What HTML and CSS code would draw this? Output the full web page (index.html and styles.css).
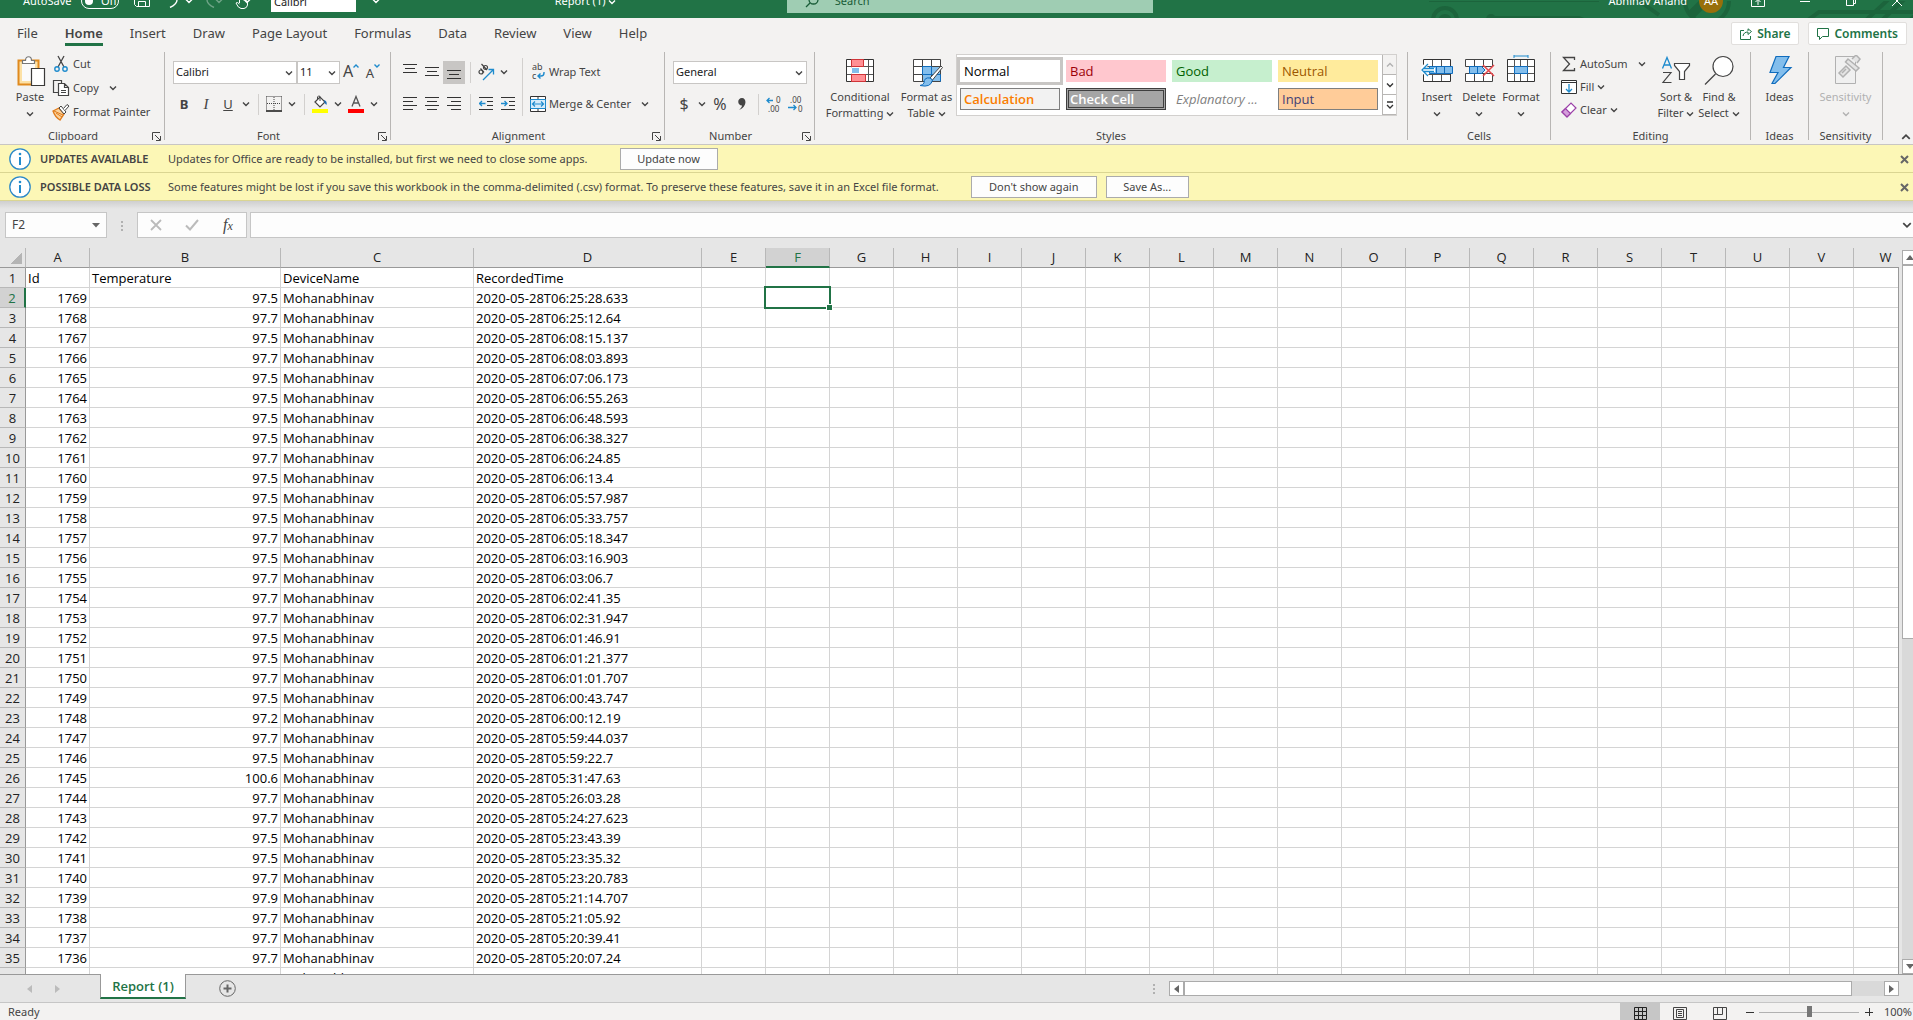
FILE: index.html
```
<!DOCTYPE html>
<html lang="en">
<head>
    <meta charset="UTF-8">
    <meta name="viewport" content="width=device-width, initial-scale=1.0">
    <title>Report (1) - Excel</title>
    <link rel="stylesheet" href="styles.css">
</head>
<body>
    <!-- Shared symbols -->
    <svg class="symbols" aria-hidden="true">
        <symbol id="chevron" viewBox="0 0 8 6"><path d="M1 1.5 L4 4.5 L7 1.5" fill="none" stroke="currentColor" stroke-width="1.4"/></symbol>
        <symbol id="launcher" viewBox="0 0 9 9"><path d="M.5 8 V.5 H8 M3 3 L8 8 M8.5 4 V8.5 H4" fill="none" stroke="currentColor"/></symbol>
        <symbol id="cross" viewBox="0 0 9 9"><path d="M1 1 L8 8 M8 1 L1 8" fill="none" stroke="currentColor" stroke-width="2"/></symbol>
        <symbol id="info" viewBox="0 0 22 22"><circle cx="11" cy="11" r="10.2" fill="#fff" stroke="#2b88c8" stroke-width="1.3"/><path d="M11 9 V17" stroke="#1e8bcd" stroke-width="2"/><circle cx="11" cy="6" r="1.3" fill="#1e8bcd"/></symbol>
    </svg>

    <!-- Title bar -->
    <header class="titlebar">
        <div class="titlebar-inner">
            <div class="quick">
                <label class="autosave" for="autosave">AutoSave</label>
                <button class="toggle" id="autosave"><i></i>Off</button>
                <button aria-label="Save"><svg width="18" height="18" viewBox="0 0 18 18" fill="none" stroke="#fff"><path d="M1.500 1.500 H16.500 V16.500 H3.500 L1.500 14.500 Z M5.500 16 V11.500 H12.500 V16 M4.500 2 V7.500 H13.500 V2"/></svg></button>
                <button aria-label="Undo"><svg width="16" height="18" viewBox="0 0 16 18" fill="none" stroke="#fff" stroke-width="1.400"><path d="M1 2 V9 H7 M1.500 8.500 C5 3 14 4 14 10 C14 14 10 16 7 17.500"/></svg></button>
                <svg class="caret" width="8" height="6"><use href="#chevron"/></svg>
                <button class="faded" aria-label="Redo"><svg width="16" height="18" viewBox="0 0 16 18" fill="none" stroke="#fff" stroke-width="1.400"><path d="M15 2 V9 H9 M14.500 8.500 C11 3 2 4 2 10 C2 14 6 16 9 17.500"/></svg></button>
                <svg class="caret faded" width="8" height="6"><use href="#chevron"/></svg>
                <button aria-label="Touch mode"><svg width="14" height="20" viewBox="0 0 14 20" fill="none" stroke="#fff"><path d="M4.500 14 V4 Q5.500 2.500 6.500 4 V11 V9 Q8 8 8.500 9.500 V11 Q10 9 10.500 11 V12 Q12.500 11 12.500 13 V16 Q12 19 9 19.500 H6 Q3 19 1 14 Q2 12.500 4.500 15"/></svg></button>
                <svg class="caret" width="8" height="6"><use href="#chevron"/></svg>
                <input class="quick-font" value="Calibri" aria-label="Font">
                <svg class="caret" width="8" height="6"><use href="#chevron"/></svg>
            </div>
            <div class="doc-name">Report (1) <svg width="8" height="6"><use href="#chevron"/></svg></div>
            <label class="search">
                <svg width="14" height="14" viewBox="0 0 14 14" fill="none" stroke="#185c37" stroke-width="1.300"><circle cx="8.500" cy="5.500" r="4.500"/><path d="M5 9 L1 13"/></svg>
                <input placeholder="Search" aria-label="Search">
            </label>
            <div class="account">
                <svg class="circuit" width="500" height="18" viewBox="0 0 500 18" fill="none" stroke="#1c643c" stroke-width="4"><circle cx="16" cy="19" r="12"/><circle cx="16" cy="20" r="5" fill="#1c643c"/><circle cx="62" cy="18" r="3"/><path d="M66 17 H150 L162 22 M0 -1 H170 M205 -4 L230 14 M375 22 L390 11 H500 M436 20 L462 -4 M452 20 L478 -4 M480 20 L500 2"/><circle cx="278" cy="0" r="22"/><path d="M262 14 L278 -2" stroke-width="9"/></svg>
                <span>Abhinav Anand</span>
                <span class="avatar">AA</span>
                <button aria-label="Ribbon options"><svg width="14" height="12" viewBox="0 0 14 12" fill="none" stroke="#fff"><path d="M.5 .5 H13.500 V11.500 H.5 Z M7 10 V5 M4.500 7 L7 4.500 L9.500 7"/></svg></button>
                <button aria-label="Minimize"><svg width="12" height="12" viewBox="0 0 12 12" stroke="#fff"><path d="M1 6.500 H11"/></svg></button>
                <button aria-label="Restore"><svg width="12" height="12" viewBox="0 0 12 12" fill="none" stroke="#fff"><path d="M1.500 3.500 H8.500 V10.500 H1.500 Z M3.500 3 V1.500 H10.500 V8.500 H9"/></svg></button>
                <button aria-label="Close"><svg width="12" height="12" viewBox="0 0 12 12" stroke="#fff"><path d="M1 1 L11 11 M11 1 L1 11"/></svg></button>
            </div>
        </div>
    </header>

    <!-- Ribbon tabs -->
    <nav class="tabs">
        <a href="#">File</a>
        <a href="#" class="active">Home</a>
        <a href="#">Insert</a>
        <a href="#">Draw</a>
        <a href="#">Page Layout</a>
        <a href="#">Formulas</a>
        <a href="#">Data</a>
        <a href="#">Review</a>
        <a href="#">View</a>
        <a href="#">Help</a>
        <span class="spacer"></span>
        <button class="pill"><svg width="12" height="12" viewBox="0 0 12 12" fill="none" stroke="#217346"><path d="M4 2.500 H.5 V11.500 H10.500 V8 M3 8 C3.500 5 5.500 4 8 4 V6.500 L11.500 3.500 L8 .8 V3"/></svg>Share</button>
        <button class="pill"><svg width="12" height="12" viewBox="0 0 12 12" fill="none" stroke="#217346"><path d="M.5 .5 H11.500 V8.500 H5.500 L2.500 11.500 V8.500 H.5 Z"/></svg>Comments</button>
    </nav>

    <!-- Ribbon -->
    <section class="ribbon">
        <div class="group clipboard">
            <div class="group-body">
                <button class="big">
                    <svg width="32" height="32" viewBox="0 0 32 32" fill="none"><path d="M4.500 5.500 H24.500 V29.500 H4.500 Z" fill="#fce1a6" stroke="#e08a1e" stroke-width="2"/><path d="M8 9 H21 V26 H8 Z" fill="#fafafa"/><path d="M8.500 8.500 V5.500 H11.500 C11.500 .5 17.500 .5 17.500 5.500 H20.500 V8.500 Z" fill="#fff" stroke="#777" stroke-width="1.200"/><path d="M17.500 13.500 H30.500 V30.500 H17.500 Z" fill="#fff" stroke="#3b3a39" stroke-width="1.200"/></svg>
                    <span>Paste</span><span><svg width="8" height="6"><use href="#chevron"/></svg></span>
                </button>
                <div class="stack">
                    <button class="small"><svg width="18" height="18" viewBox="0 0 18 18" fill="none"><path d="M6 1 L12 12 M12 1 L6 12" stroke="#444" stroke-width="1.300"/><circle cx="5" cy="14" r="2.200" stroke="#1e8bcd" stroke-width="1.400"/><circle cx="13" cy="14" r="2.200" stroke="#1e8bcd" stroke-width="1.400"/></svg>Cut</button>
                    <button class="small"><svg width="18" height="18" viewBox="0 0 18 18" fill="none" stroke="#444" stroke-width="1.200"><path d="M6 13.500 H1.500 V1.500 H9.500 V4"/><path d="M6.500 4.500 H12.500 L16.500 8.500 V16.500 H6.500 Z M12.500 4.500 V8.500 H16 M9 11.500 H14 M9 13.500 H14" fill="#fff"/></svg>Copy<svg class="chev" width="8" height="6"><use href="#chevron"/></svg></button>
                    <button class="small"><svg width="18" height="18" viewBox="0 0 18 18" fill="none"><path d="M1 8 L7 5 L12 11 L8 17 Q3 14 1 8 Z" fill="#fbd29c" stroke="#e07b1a" stroke-width="1.300"/><path d="M4 10 L10 14 M2 8 L11 12" stroke="#e07b1a"/><path d="M7 5 L9 3 L14 9 L12 11 Z" fill="#fff" stroke="#444"/><path d="M11.500 5.500 L15 1.500 L17 3 L13 7.500" fill="#fff" stroke="#444"/></svg>Format Painter</button>
                </div>
            </div>
            <div class="group-label">Clipboard<svg width="9" height="9"><use href="#launcher"/></svg></div>
        </div>

        <div class="group font">
            <div class="group-body rows">
                <div class="row">
                    <label class="combo combo-font"><select aria-label="Font name"><option>Calibri</option></select><svg width="8" height="6"><use href="#chevron"/></svg></label>
                    <label class="combo combo-size"><select aria-label="Font size"><option>11</option></select><svg width="8" height="6"><use href="#chevron"/></svg></label>
                    <button class="tool grow">A<svg width="6" height="4" viewBox="0 0 6 4"><path d="M.5 3.500 L3 1 L5.500 3.500" fill="none" stroke="#1e8bcd" stroke-width="1.400"/></svg></button>
                    <button class="tool shrink">A<svg width="6" height="4" viewBox="0 0 6 4"><path d="M.5 .5 L3 3 L5.500 .5" fill="none" stroke="#1e8bcd" stroke-width="1.400"/></svg></button>
                </div>
                <div class="row">
                    <button class="tool bold">B</button>
                    <button class="tool italic">I</button>
                    <button class="tool underline">U</button>
                    <button class="drop" aria-label="Underline options"><svg width="8" height="6"><use href="#chevron"/></svg></button>
                    <span class="sep"></span>
                    <button class="tool" aria-label="Borders"><svg width="16" height="16" viewBox="0 0 16 16" fill="none" stroke="#444"><path d="M.5 .5 H15.500 M.5 .5 V14 M15.500 .5 V14 M8 1 V14 M1 7.500 H15" stroke-dasharray="1 1"/><path d="M0 15 H16" stroke="#222" stroke-width="1.600"/></svg></button>
                    <button class="drop" aria-label="Border options"><svg width="8" height="6"><use href="#chevron"/></svg></button>
                    <span class="sep"></span>
                    <button class="tool" aria-label="Fill color"><svg width="16" height="18" viewBox="0 0 16 18" fill="none"><path d="M3 7 L8 2 L13 7 L8 12 Z" fill="#fff" stroke="#444" stroke-width="1.200"/><path d="M8 6 V1.500 Q6.500 0 5.500 2 V4" stroke="#444"/><path d="M12 5 Q15.500 6 14.500 10 L12.500 8 Z" fill="#1e6fb5"/><path d="M0 14 H16 V18 H0 Z" fill="#ff0"/></svg></button>
                    <button class="drop" aria-label="Fill options"><svg width="8" height="6"><use href="#chevron"/></svg></button>
                    <button class="tool" aria-label="Font color"><svg width="16" height="18" viewBox="0 0 16 18" fill="none"><path d="M4 11.500 L8 1.500 L12 11.500 M5.300 8 H10.700" stroke="#555" stroke-width="1.300"/><path d="M0 14 H16 V18 H0 Z" fill="#f00"/></svg></button>
                    <button class="drop" aria-label="Font color options"><svg width="8" height="6"><use href="#chevron"/></svg></button>
                </div>
            </div>
            <div class="group-label">Font<svg width="9" height="9"><use href="#launcher"/></svg></div>
        </div>

        <div class="group alignment">
            <div class="group-body">
                <div class="rows align-rows">
                    <div class="row">
                        <button class="tool" aria-label="Top align"><svg width="14" height="18" viewBox="0 0 14 18" stroke="#333"><path d="M0 1.500 H14 M2 5.500 H12 M0 9.500 H14"/></svg></button>
                        <button class="tool" aria-label="Middle align"><svg width="14" height="18" viewBox="0 0 14 18" stroke="#333"><path d="M0 4.500 H14 M2 8.500 H12 M0 12.500 H14"/></svg></button>
                        <button class="tool pressed" aria-label="Bottom align"><svg width="14" height="18" viewBox="0 0 14 18" stroke="#333"><path d="M0 7.500 H14 M2 11.500 H12 M0 15.500 H14"/></svg></button>
                        <span class="sep"></span>
                        <button class="tool" aria-label="Orientation"><svg width="18" height="18" viewBox="0 0 18 18" fill="none"><g stroke="#444" stroke-width="1.200"><circle cx="4" cy="9" r="2"/><path d="M3.500 5.500 L7 9.500 M4.500 1 L10 7"/><circle cx="8.500" cy="4.500" r="2"/></g><path d="M6 17 L16 7 M11.500 6.500 H16.500 V11.500" stroke="#1e8bcd" stroke-width="1.300"/></svg></button>
                        <button class="drop" aria-label="Orientation options"><svg width="8" height="6"><use href="#chevron"/></svg></button>
                    </div>
                    <div class="row">
                        <button class="tool" aria-label="Align left"><svg width="14" height="14" viewBox="0 0 14 14" stroke="#333"><path d="M0 .5 H14 M0 4.500 H10 M0 8.500 H14 M0 12.500 H10"/></svg></button>
                        <button class="tool" aria-label="Center"><svg width="14" height="14" viewBox="0 0 14 14" stroke="#333"><path d="M0 .5 H14 M2 4.500 H12 M0 8.500 H14 M2 12.500 H12"/></svg></button>
                        <button class="tool" aria-label="Align right"><svg width="14" height="14" viewBox="0 0 14 14" stroke="#333"><path d="M0 .5 H14 M4 4.500 H14 M0 8.500 H14 M4 12.500 H14"/></svg></button>
                        <span class="sep"></span>
                        <button class="tool" aria-label="Decrease indent"><svg width="14" height="14" viewBox="0 0 14 14" fill="none" stroke="#333"><path d="M0 .5 H14 M8 4.500 H14 M8 8.500 H14 M0 12.500 H14"/><path d="M6.500 6.500 H.5 M3 4 L.5 6.500 L3 9" stroke="#1e8bcd" stroke-width="1.300"/></svg></button>
                        <button class="tool" aria-label="Increase indent"><svg width="14" height="14" viewBox="0 0 14 14" fill="none" stroke="#333"><path d="M0 .5 H14 M8 4.500 H14 M8 8.500 H14 M0 12.500 H14"/><path d="M0 6.500 H6 M3.500 4 L6 6.500 L3.500 9" stroke="#1e8bcd" stroke-width="1.300"/></svg></button>
                    </div>
                </div>
                <span class="sep tall"></span>
                <div class="rows wrap-rows">
                    <button class="small"><svg width="16" height="18" viewBox="0 0 16 18"><text x="2" y="7" class="glyph">ab</text><text x="2" y="16" class="glyph">c</text><path d="M14 9 V10 Q14 13 11 13 H8 M10.500 10.500 L8 13 L10.500 15.500" fill="none" stroke="#1e8bcd" stroke-width="1.400"/></svg>Wrap Text</button>
                    <button class="small"><svg width="16" height="16" viewBox="0 0 16 16" fill="none"><path d="M.5 .5 H15.500 V15.500 H.5 Z M8 0 V4 M8 12 V16" fill="#fff" stroke="#333"/><path d="M.5 3.500 H15.500 V12.500 H.5 Z" fill="#d6ecfa" stroke="#1e8bcd"/><path d="M3 8 H13 M5 5.500 L2.500 8 L5 10.500 M11 5.500 L13.500 8 L11 10.500" stroke="#1e8bcd" stroke-width="1.200"/></svg>Merge &amp; Center<svg class="chev" width="8" height="6"><use href="#chevron"/></svg></button>
                </div>
            </div>
            <div class="group-label">Alignment<svg width="9" height="9"><use href="#launcher"/></svg></div>
        </div>

        <div class="group number">
            <div class="group-body rows">
                <div class="row">
                    <label class="combo combo-number"><select aria-label="Number format"><option>General</option></select><svg width="8" height="6"><use href="#chevron"/></svg></label>
                </div>
                <div class="row">
                    <button class="tool sign">$</button>
                    <button class="drop" aria-label="Currency options"><svg width="8" height="6"><use href="#chevron"/></svg></button>
                    <button class="tool sign">%</button>
                    <button class="tool" aria-label="Comma style"><svg width="8" height="12" viewBox="0 0 8 12"><path d="M4 0 C9 0 9 9 1 12 C3 10 4 9 4 7.500 C-1 7.500 -1 0 4 0 Z" fill="#444"/></svg></button>
                    <span class="sep"></span>
                    <button class="tool" aria-label="Increase decimal"><svg width="16" height="16" viewBox="0 0 16 16"><text x="10" y="7" class="digits">0</text><text x="2" y="16" class="digits">.00</text><path d="M7 4.500 H1 M3.500 2 L1 4.500 L3.500 7" fill="none" stroke="#1e8bcd" stroke-width="1.300"/></svg></button>
                    <button class="tool" aria-label="Decrease decimal"><svg width="16" height="16" viewBox="0 0 16 16"><text x="2" y="7" class="digits">.00</text><text x="10" y="16" class="digits">0</text><path d="M0 11.500 H8 M5.500 9 L8 11.500 L5.500 14" fill="none" stroke="#1e8bcd" stroke-width="1.300"/></svg></button>
                </div>
            </div>
            <div class="group-label">Number<svg width="9" height="9"><use href="#launcher"/></svg></div>
        </div>

        <div class="group styles">
            <div class="group-body">
                <button class="big wide">
                    <svg width="32" height="32" viewBox="0 0 32 32" fill="none"><path d="M2.500 4.500 H29.500 V26.500 H2.500 Z" fill="#fff" stroke="#333"/><path d="M3 11.500 H29 M3 19.500 H29 M7.500 5 V26 M24.500 5 V26" stroke="#555"/><path d="M7.500 4.500 H19.500 V11.500 H7.500 Z M7.500 19.500 H21.500 V26.500 H7.500 Z" fill="#ff9095" stroke="#d13438"/><path d="M7.500 12.500 H15.500 V18.500 H7.500 Z" fill="#83beec" stroke="#fff"/></svg>
                    <span>Conditional</span><span>Formatting <svg width="8" height="6"><use href="#chevron"/></svg></span>
                </button>
                <button class="big mid">
                    <svg width="32" height="32" viewBox="0 0 32 32" fill="none"><path d="M2.500 4.500 H29.500 V26.500 H2.500 Z" fill="#fff"/><path d="M11.500 11.500 H29.500 V26.500 H11.500 Z" fill="#83beec"/><path d="M2.500 4.500 H29.500 V26.500 H2.500 Z M3 11.500 H29 M3 19.500 H29 M11.500 5 V26 M20.500 5 V26" stroke="#444"/><path d="M11.500 19.500 H29.500 V26.500 M11.500 19.500 H20.500 V11.500 H11.500 Z" stroke="#0f6cbd"/><path d="M30 11 L19 23 L21.500 25 L31.500 12.500 Z" fill="#fff" stroke="#444"/><path d="M19 23 Q13 22 13 28 Q12 30 9 30.500 Q20 33 21.500 25 Z" fill="#83beec" stroke="#0f6cbd"/></svg>
                    <span>Format as</span><span>Table <svg width="8" height="6"><use href="#chevron"/></svg></span>
                </button>
                <div class="gallery">
                    <div class="swatches">
                        <button class="swatch normal">Normal</button>
                        <button class="swatch bad">Bad</button>
                        <button class="swatch good">Good</button>
                        <button class="swatch neutral">Neutral</button>
                        <button class="swatch calculation">Calculation</button>
                        <button class="swatch check">Check Cell</button>
                        <button class="swatch explanatory">Explanatory ...</button>
                        <button class="swatch input">Input</button>
                    </div>
                    <div class="gallery-scroll">
                        <button class="off" aria-label="Previous styles"><svg class="flip" width="8" height="6"><use href="#chevron"/></svg></button>
                        <button aria-label="Next styles"><svg width="8" height="6"><use href="#chevron"/></svg></button>
                        <button aria-label="More styles"><svg width="8" height="8" viewBox="0 0 8 8" fill="none" stroke="#333" stroke-width="1.300"><path d="M1 1 H7 M1 4 L4 7 L7 4"/></svg></button>
                    </div>
                </div>
            </div>
            <div class="group-label plain">Styles</div>
        </div>

        <div class="group cells">
            <div class="group-body">
                <button class="big slim">
                    <svg width="32" height="32" viewBox="0 0 32 32" fill="none"><path d="M2.500 4.500 H29.500 V26.500 H2.500 Z" fill="#fff" stroke="#333"/><path d="M3 11.500 H29 M3 19.500 H29 M11.500 5 V26 M20.500 5 V26" stroke="#555"/><path d="M8.500 11.500 H31.500 V18.500 H8.500 Z M15.500 12 V18 M23.500 12 V18" fill="#83beec" stroke="#0f6cbd"/><path d="M6.500 8.500 L.5 14.500 L6.500 20.500 M1 15 H14" stroke="#fff" stroke-width="4"/><path d="M7 9 L1 15 L7 21 M3 13.500 H13 M3 16.500 H13" stroke="#1e8bcd" stroke-width="1.300"/></svg>
                    <span>Insert</span><span><svg width="8" height="6"><use href="#chevron"/></svg></span>
                </button>
                <button class="big slim">
                    <svg width="32" height="32" viewBox="0 0 32 32" fill="none"><path d="M2.500 4.500 H29.500 V11.500 H2.500 Z M2.500 18.500 H29.500 V26.500 H2.500 Z M11.500 5 V11 M20.500 5 V11 M11.500 19 V26 M20.500 19 V26" fill="#fff" stroke="#444"/><path d="M6.500 11.500 H18.500 L22 15 L18.500 18.500 H6.500 Z M14.500 12 V18" fill="#83beec" stroke="#0f6cbd"/><path d="M20 10 L31 21 M31 10 L20 21" stroke="#e8474c" stroke-width="1.500"/></svg>
                    <span>Delete</span><span><svg width="8" height="6"><use href="#chevron"/></svg></span>
                </button>
                <button class="big slim">
                    <svg width="32" height="32" viewBox="0 0 32 32" fill="none"><path d="M2.500 4.500 H29.500 V26.500 H2.500 Z" fill="#fff" stroke="#333"/><path d="M3 11.500 H29 M3 18.500 H29 M9.500 5 V26 M15.500 5 V11 M22.500 5 V26 M15.500 19 V26" stroke="#555"/><path d="M9.500 11.500 H22.500 V18.500 H9.500 Z" fill="#83beec" stroke="#0f6cbd"/><path d="M9 1 H23 M9 -1 V3 M23 -1 V3" stroke="#1e8bcd"/></svg>
                    <span>Format</span><span><svg width="8" height="6"><use href="#chevron"/></svg></span>
                </button>
            </div>
            <div class="group-label plain">Cells</div>
        </div>

        <div class="group editing">
            <div class="group-body">
                <div class="stack">
                    <button class="small"><svg width="16" height="16" viewBox="0 0 16 16" fill="none" stroke="#444" stroke-width="1.300"><path d="M13.500 4 V1.500 H2.500 L8.500 8 L2.500 14.500 H13.500 V12"/></svg>AutoSum<svg class="chev" width="8" height="6"><use href="#chevron"/></svg></button>
                    <button class="small"><svg width="16" height="16" viewBox="0 0 16 16" fill="none"><path d="M.5 1.500 H15.500 V14.500 H.5 Z M.5 3.500 H15.500" fill="#fff" stroke="#333"/><path d="M8 5 V13 M5 10 L8 13 L11 10" stroke="#1e8bcd" stroke-width="1.300"/></svg>Fill<svg width="8" height="6"><use href="#chevron"/></svg></button>
                    <button class="small"><svg width="16" height="16" viewBox="0 0 16 16" fill="none"><path d="M1 10 L10 1 L15 6 L6 15 Z" fill="#fff" stroke="#9b3fa8" stroke-width="1.200"/><path d="M1 10 L4.500 6.500 L9.500 11.500 L6 15 Z" fill="#d59edb" stroke="#9b3fa8" stroke-width="1.200"/></svg>Clear<svg width="8" height="6"><use href="#chevron"/></svg></button>
                </div>
                <button class="big slim">
                    <svg width="32" height="32" viewBox="0 0 32 32" fill="none"><path d="M2.500 13.500 L7 2.500 L11.500 13.500 M4 10 H10" stroke="#1e8bcd" stroke-width="1.300"/><path d="M3 17.500 H11 L3 27.500 H11.500" stroke="#444" stroke-width="1.200"/><path d="M14.500 8.500 H29.500 V10.500 L24.500 16.500 V24.500 H19.500 V16.500 L14.500 10.500 Z" fill="#fff" stroke="#444" stroke-width="1.200"/></svg>
                    <span>Sort &amp;</span><span>Filter <svg width="8" height="6"><use href="#chevron"/></svg></span>
                </button>
                <button class="big find">
                    <svg width="32" height="32" viewBox="0 0 32 32" fill="none" stroke="#444" stroke-width="1.200"><circle cx="20" cy="11.500" r="10" fill="#fff"/><path d="M12.500 19 L2 29.500"/></svg>
                    <span>Find &amp;</span><span>Select <svg width="8" height="6"><use href="#chevron"/></svg></span>
                </button>
            </div>
            <div class="group-label plain">Editing</div>
        </div>

        <div class="group ideas">
            <div class="group-body">
                <button class="big">
                    <svg width="32" height="32" viewBox="0 0 32 32"><path d="M12 1.500 H25 L19.500 12.500 H27 L11 28.500 H8 L14 17.500 H6 Z" fill="#83beec" stroke="#0f6cbd" stroke-width="1.200"/></svg>
                    <span>Ideas</span>
                </button>
            </div>
            <div class="group-label plain">Ideas</div>
        </div>

        <div class="group sensitivity">
            <div class="group-body">
                <button class="big" disabled>
                    <svg width="32" height="32" viewBox="0 0 32 32" fill="none"><path d="M5.500 1.500 H25.500 V28.500 H5.500 Z" fill="#f0f0f0" stroke="#b1b1b1"/><path d="M9 18 L16 11 L20 15 L13 22 Z M12 18 L16 14" fill="#e4e4e4" stroke="#b1b1b1" stroke-width="1.500"/><path d="M18 4 L29 13 L26 16 L15.500 7 Z M22 4 L26 0 L30 4 L27 8" fill="#e4e4e4" stroke="#b1b1b1" stroke-width="1.500"/></svg>
                    <span>Sensitivity</span><span><svg width="8" height="6"><use href="#chevron"/></svg></span>
                </button>
            </div>
            <div class="group-label plain">Sensitivity</div>
        </div>

        <button class="collapse" aria-label="Collapse the ribbon"><svg class="flip" width="10" height="8"><use href="#chevron"/></svg></button>
    </section>

    <!-- Message bars -->
    <div class="notice">
        <svg width="22" height="22"><use href="#info"/></svg>
        <strong>UPDATES AVAILABLE</strong>
        <span class="message">Updates for Office are ready to be installed, but first we need to close some apps.</span>
        <button class="notice-button update">Update now</button>
        <button class="dismiss" aria-label="Close"><svg width="9" height="9"><use href="#cross"/></svg></button>
    </div>
    <div class="notice">
        <svg width="22" height="22"><use href="#info"/></svg>
        <strong>POSSIBLE DATA LOSS</strong>
        <span class="message">Some features might be lost if you save this workbook in the comma-delimited (.csv) format. To preserve these features, save it in an Excel file format.</span>
        <button class="notice-button dont-show">Don't show again</button>
        <button class="notice-button save-as">Save As...</button>
        <button class="dismiss" aria-label="Close"><svg width="9" height="9"><use href="#cross"/></svg></button>
    </div>

    <!-- Formula bar -->
    <div class="formula-bar">
        <label class="name-box"><input value="F2" aria-label="Name box"><svg width="8" height="5" viewBox="0 0 8 5"><path d="M0 0 H8 L4 4.500 Z" fill="#666"/></svg></label>
        <span class="grip"><i></i><i></i><i></i></span>
        <div class="formula-tools">
            <button aria-label="Cancel"><svg width="12" height="12" viewBox="0 0 12 12"><path d="M1 1 L11 11 M11 1 L1 11" stroke="#bbb" stroke-width="1.800"/></svg></button>
            <button aria-label="Enter"><svg width="14" height="12" viewBox="0 0 14 12"><path d="M1 6.500 L5 10.500 L13 1" fill="none" stroke="#bbb" stroke-width="2"/></svg></button>
            <button class="fx"><i>f</i><sub>x</sub></button>
        </div>
        <label class="formula"><input aria-label="Formula"><svg width="10" height="8"><use href="#chevron"/></svg></label>
    </div>

    <!-- Worksheet -->
    <main class="sheet">
        <div class="sheet-view">
            <table class="grid">
                <colgroup id="cols"></colgroup>
                <thead><tr id="letters"></tr></thead>
                <tbody id="rows"></tbody>
            </table>
        </div>
        <div class="vscroll">
            <button aria-label="Scroll up"><svg width="8" height="5" viewBox="0 0 8 5"><path d="M4 0 L8 5 H0 Z" fill="#666"/></svg></button>
            <span class="vthumb"></span>
            <span class="vtrack"></span>
            <button aria-label="Scroll down"><svg width="8" height="5" viewBox="0 0 8 5"><path d="M0 0 H8 L4 5 Z" fill="#666"/></svg></button>
        </div>
    </main>

    <!-- Sheet tabs and horizontal scroll -->
    <div class="sheet-bar">
        <div class="sheet-nav">
            <button aria-label="Previous sheet"><svg width="5" height="8" viewBox="0 0 5 8"><path d="M5 0 V8 L0 4 Z" fill="#bbb"/></svg></button>
            <button aria-label="Next sheet"><svg width="5" height="8" viewBox="0 0 5 8"><path d="M0 0 V8 L5 4 Z" fill="#bbb"/></svg></button>
        </div>
        <button class="sheet-tab">Report (1)</button>
        <button class="add-sheet" aria-label="New sheet"><svg width="17" height="17" viewBox="0 0 17 17" fill="none" stroke="#666"><circle cx="8.500" cy="8.500" r="7.800"/><path d="M8.500 4.500 V12.500 M4.500 8.500 H12.500" stroke-width="2"/></svg></button>
        <span class="grip"><i></i><i></i><i></i></span>
        <div class="hscroll">
            <button aria-label="Scroll left"><svg width="5" height="8" viewBox="0 0 5 8"><path d="M5 0 V8 L0 4 Z" fill="#666"/></svg></button>
            <span class="hthumb"></span>
            <span class="htrack"></span>
            <button aria-label="Scroll right"><svg width="5" height="8" viewBox="0 0 5 8"><path d="M0 0 V8 L5 4 Z" fill="#666"/></svg></button>
        </div>
    </div>

    <!-- Status bar -->
    <footer class="status">
        <span>Ready</span>
        <span class="spacer"></span>
        <button class="view current" aria-label="Normal view"><svg width="13" height="13" viewBox="0 0 13 13" fill="none" stroke="#222"><path d="M.5 .5 H12.500 V12.500 H.5 Z M4.500 0 V13 M8.500 0 V13 M0 4.500 H13 M0 8.500 H13"/></svg></button>
        <button class="view" aria-label="Page layout"><svg width="14" height="13" viewBox="0 0 14 13" fill="none" stroke="#444"><path d="M.5 .5 H13.500 V12.500 H.5 Z M3.500 2.500 H10.500 V10.500 H3.500 Z M5 4.500 H9 M5 6.500 H9 M5 8.500 H9"/></svg></button>
        <button class="view" aria-label="Page break preview"><svg width="14" height="13" viewBox="0 0 14 13" fill="none" stroke="#444"><path d="M.5 .5 H13.500 V12.500 H.5 Z M4.500 1 V7.500 M9.500 1 V7.500 M1 7.500 H9.500"/></svg></button>
        <button class="zoom-step" aria-label="Zoom out"><svg width="8" height="8" viewBox="0 0 8 8" stroke="#333"><path d="M0 4.500 H8"/></svg></button>
        <input class="zoom" type="range" min="0" max="100" value="50" aria-label="Zoom">
        <button class="zoom-step" aria-label="Zoom in"><svg width="8" height="8" viewBox="0 0 8 8" stroke="#333"><path d="M0 4.500 H8 M4.500 0 V8"/></svg></button>
        <span class="zoom-value">100%</span>
    </footer>

    <script src="script.js"></script>
</body>
</html>
```
FILE: styles.css
```
* {
    box-sizing: border-box;
}
body {
    display: flex;
    flex-direction: column;
    height: 100vh;
    margin: 0;
    overflow: hidden;
    background-color: #e6e6e6;
    color: #444;
    font-family: "Noto Sans", "Open Sans", sans-serif;
    font-size: 11px;
    line-height: 16px;
}
button, input, select {
    margin: 0;
    padding: 0;
    border: 0;
    background: none;
    color: inherit;
    font: inherit;
}
svg {
    flex: none;
}
.symbols {
    position: absolute;
    width: 0;
    height: 0;
}
.spacer {
    flex: 1;
}

/* Title bar, its upper half runs above the window edge */
.titlebar {
    flex: none;
    height: 18px;
    overflow: hidden;
    background-color: #217346;
    color: #fff;
}
.titlebar-inner {
    display: grid;
    grid-template-columns: 29% 232px 366px 1fr;
    height: 36px;
    margin-top: -17px;
    align-items: center;
}
.quick {
    display: flex;
    align-items: center;
    padding-left: 23px;
}
.autosave {
    width: 58px;
}
.toggle {
    display: flex;
    align-items: center;
    gap: 8px;
    width: 38px;
    height: 16px;
    margin-right: 14px;
    padding-left: 3px;
    border: 1px solid #fff;
    border-radius: 8px;
}
.toggle i {
    width: 8px;
    height: 8px;
    border-radius: 50%;
    background-color: #fff;
}
.quick button + button {
    margin-right: 12px;
}
.quick .caret {
    margin: 0 12px 0 -6px;
}
.faded {
    opacity: 0.35;
}
.quick-font {
    width: 85px;
    height: 22px;
    margin: 0 22px 0 8px;
    padding-left: 3px;
    background-color: #fff;
    color: #222;
}
.search {
    display: flex;
    align-items: center;
    align-self: center;
    gap: 16px;
    height: 24px;
    padding-left: 18px;
    background-color: #9fcdb3;
}
.search input::placeholder {
    color: #185c37;
    opacity: 1;
}
.account {
    position: relative;
    display: flex;
    align-items: center;
    justify-content: flex-end;
    height: 36px;
    padding-right: 10px;
}
.account span, .account button {
    position: relative;
}
.account button {
    display: flex;
    margin-left: 34px;
}
.circuit {
    position: absolute;
    right: -16px;
    bottom: 0;
}
.account .avatar {
    width: 24px;
    height: 24px;
    margin: 0 -6px 0 12px;
    border-radius: 50%;
    background-color: #986f0b;
    line-height: 24px;
    text-align: center;
}

/* Ribbon tabs */
.tabs {
    display: flex;
    flex: none;
    gap: 27px;
    height: 34px;
    padding: 4px 6px 0 17px;
    background-color: #f3f2f1;
    font-size: 13px;
}
.tabs a {
    height: 24px;
    color: #444;
    line-height: 22px;
    text-decoration: none;
}
.tabs .active {
    border-bottom: 3px solid #217346;
    font-weight: 600;
}
.pill {
    display: flex;
    align-items: center;
    gap: 5px;
    height: 23px;
    padding: 0 8px;
    border: 1px solid #e1dfdd;
    border-radius: 2px;
    background-color: #fff;
    color: #217346;
    font-size: 12px;
    font-weight: 600;
}
.pill + .pill {
    margin-left: -18px;
}

/* Ribbon */
.ribbon {
    display: flex;
    flex: none;
    height: 93px;
    border-bottom: 1px solid #c8c6c4;
    background-color: #f3f2f1;
}
.group {
    display: flex;
    flex: none;
    flex-direction: column;
    height: 88px;
    border-right: 1px solid #b8b6b4;
}
.clipboard { width: 165px; }
.font { width: 226px; }
.alignment { width: 274px; }
.number { width: 150px; }
.styles { flex: 1; }
.cells { width: 143px; }
.editing { width: 200px; }
.ideas { width: 58px; }
.sensitivity { width: 74px; }
.group-body {
    display: flex;
    height: 76px;
    padding-left: 8px;
}
.group-label {
    position: relative;
    height: 12px;
    padding-right: 18px;
    text-align: center;
}
.group-label svg {
    position: absolute;
    right: 3px;
    top: 4px;
}
.group-label.plain {
    padding-right: 0;
}
.rows {
    display: flex;
    flex-direction: column;
    padding-top: 4px;
}
.row {
    display: flex;
    align-items: center;
    height: 32px;
}
.tool, .drop {
    display: flex;
    align-items: center;
    justify-content: center;
    width: 22px;
    height: 23px;
}
.drop {
    width: 14px;
}
.sep {
    width: 1px;
    height: 21px;
    margin: 0 4px 0 5px;
    background-color: #d2d0ce;
}
.sep.tall {
    height: 58px;
    margin: 6px 7px 0 3px;
}
.pressed {
    background-color: #c8c6c4;
}
.bold {
    font-size: 13px;
    font-weight: 700;
}
.italic {
    font-family: "Liberation Serif", serif;
    font-size: 15px;
    font-style: italic;
}
.underline {
    font-size: 13px;
    text-decoration: underline;
}
.sign {
    font-size: 16px;
}
.grow, .shrink {
    align-items: flex-start;
    font-size: 16px;
    line-height: 20px;
}
.shrink {
    font-size: 13px;
    line-height: 24px;
}
.grow svg, .shrink svg {
    margin-top: 3px;
}
.combo {
    position: relative;
    height: 23px;
    border: 1px solid #c8c6c4;
    background-color: #fff;
}
.combo select {
    width: 100%;
    height: 21px;
    padding-left: 2px;
    appearance: none;
    color: #222;
}
.combo svg {
    position: absolute;
    right: 3px;
    top: 8px;
    pointer-events: none;
}
.combo-font { width: 124px; }
.combo-size { width: 43px; }
.combo-number { width: 134px; }
.align-rows {
    width: 120px;
    padding-top: 4px;
}
.glyph {
    fill: #444;
    font-size: 9px;
}
.digits {
    fill: #444;
    font-size: 8px;
}
.small {
    display: flex;
    align-items: center;
    gap: 3px;
    height: 24px;
    white-space: nowrap;
}
.small .chev {
    margin-left: 7px;
}
.wrap-rows .small {
    height: 32px;
}
.editing .small {
    height: 23px;
}
.editing .stack {
    width: 94px;
}
.editing .group-body {
    padding-left: 10px;
}
.big {
    display: flex;
    flex-direction: column;
    align-items: center;
    width: 44px;
    height: 70px;
    padding-top: 3px;
    white-space: nowrap;
}
.big > svg {
    margin-bottom: 2px;
}
.big:disabled {
    color: #b1b1b1;
}
.big.wide { width: 74px; }
.big.mid { width: 59px; }
.big.slim { width: 42px; }
.ideas .big, .sensitivity .big {
    width: 100%;
}
.ideas .group-body, .sensitivity .group-body {
    padding-left: 0;
}
.gallery {
    display: flex;
    flex: 1;
    height: 62px;
    margin: 2px 10px 0 0;
    border: 1px solid #d2d0ce;
    background-color: #fff;
}
.swatches {
    display: grid;
    flex: 1;
    grid-template-columns: repeat(4, 1fr);
    grid-template-rows: 22px 22px;
    gap: 6px;
    padding: 5px 4px 0 3px;
}
.swatch {
    padding-left: 4px;
    font-family: "Open Sans", sans-serif;
    font-size: 13px;
    line-height: 20px;
    text-align: left;
}
.normal { outline: 3px solid #c8c6c4; color: #000; }
.bad { background-color: #ffc7ce; color: #9c0006; }
.good { background-color: #c6efce; color: #006100; }
.neutral { background-color: #ffeb9c; color: #9c5700; }
.calculation { padding-left: 3px; border: 1px solid #7f7f7f; background-color: #f2f2f2; color: #fa7d00; font-weight: 600; }
.check { padding-left: 1px; border: 3px double #3f3f3f; background-color: #a5a5a5; color: #fff; font-weight: 600; line-height: 16px; }
.explanatory { color: #7f7f7f; font-style: italic; white-space: nowrap; }
.input { padding-left: 3px; border: 1px solid #7f7f7f; background-color: #ffcc99; color: #3f3f76; }
.gallery-scroll {
    display: flex;
    flex-direction: column;
    width: 14px;
}
.gallery-scroll button {
    flex: 1;
    border: 1px solid #b8b6b4;
    border-width: 0 0 1px 1px;
    background-color: #fff;
    color: #333;
    line-height: 0;
}
.gallery-scroll .off {
    background-color: #f3f2f1;
    color: #b1b1b1;
}
.flip {
    transform: rotate(180deg);
}
.collapse {
    align-self: flex-end;
    width: 30px;
    padding: 0 2px 3px 0;
    line-height: 0;
    text-align: right;
}

/* Message bars */
.notice {
    display: flex;
    flex: none;
    align-items: center;
    height: 28px;
    padding: 1px 4px 0 9px;
    border-bottom: 1px solid #dad592;
    background-color: #fcf7b6;
}
.notice strong {
    width: 128px;
    margin-left: 9px;
    font-weight: 600;
}
.message {
    margin-right: 32px;
    white-space: nowrap;
}
.notice-button {
    height: 22px;
    margin-right: 9px;
    border: 1px solid #ababab;
    background-color: #fdfdfd;
}
.update { width: 98px; }
.dont-show { width: 126px; }
.save-as { width: 83px; }
.dismiss {
    margin-left: auto;
    color: #666;
    line-height: 0;
}

/* Formula bar */
.formula-bar {
    display: flex;
    flex: none;
    height: 47px;
    padding: 11px 0 9px 5px;
    background: linear-gradient(#cfcfcf, #e6e6e6 8px);
}
.name-box, .formula-tools, .formula {
    display: flex;
    align-items: center;
    height: 26px;
    border: 1px solid #c6c6c6;
    background-color: #fdfdfd;
}
.name-box {
    width: 102px;
    padding: 0 6px;
    font-size: 12px;
}
.name-box input {
    width: 100%;
}
.grip {
    display: flex;
    flex-direction: column;
    justify-content: center;
    gap: 2px;
    padding: 0 14px;
}
.grip i {
    width: 2px;
    height: 2px;
    background-color: #b1b1b1;
}
.formula-tools {
    width: 110px;
    margin-right: 3px;
}
.formula-tools button {
    flex: 1;
    line-height: 0;
}
.formula-tools .fx {
    font-family: "Liberation Serif", serif;
    font-size: 16px;
    font-style: italic;
    line-height: 16px;
}
.fx sub {
    font-size: 12px;
    vertical-align: baseline;
}
.formula {
    flex: 1;
    padding-right: 1px;
    border-right: 0;
}
.formula input {
    flex: 1;
}

/* Worksheet */
.sheet {
    display: flex;
    flex: 1;
    min-height: 0;
}
.sheet-view {
    position: relative;
    flex: 1;
    min-width: 0;
    overflow: hidden;
}
.sheet-view::after {
    content: "";
    position: absolute;
    top: 19px;
    right: 0;
    bottom: 0;
    width: 1px;
    background-color: #999;
}
.grid {
    width: 1918px;
    table-layout: fixed;
    border-collapse: separate;
    border-spacing: 0;
    background-color: #fff;
    color: #000;
    font-family: "Open Sans", sans-serif;
    font-size: 13px;
    line-height: 17px;
}
.grid th, .grid td {
    height: 20px;
    padding: 2px 2px 0;
    border-right: 1px solid #d4d4d4;
    border-bottom: 1px solid #d4d4d4;
    text-align: left;
    white-space: nowrap;
}
.grid th {
    padding: 2px 0 0;
    border-color: #b8b8b8;
    background-color: #e6e6e6;
    color: #222;
    font-weight: 400;
    text-align: center;
}
.grid thead th {
    padding: 0 0 1px;
    border-bottom-color: #999;
}
.grid thead th:first-child {
    background: linear-gradient(135deg, transparent 50%, #b4b4b4 50%) 11px 5px / 11px 11px no-repeat #e6e6e6;
}
.grid tbody th {
    border-right-color: #999;
}
.grid .num {
    text-align: right;
}
.grid .picked {
    background-color: #d2d2d2;
    color: #217346;
}
.grid thead .picked {
    padding-bottom: 0;
    border-bottom: 2px solid #217346;
}
.grid tbody .picked {
    border-right: 2px solid #217346;
}
.grid .selected {
    position: relative;
}
.selected::before {
    content: "";
    position: absolute;
    inset: -2px;
    border: 2px solid #217346;
}
.selected::after {
    content: "";
    position: absolute;
    right: -3px;
    bottom: -3px;
    width: 5px;
    height: 5px;
    outline: 1px solid #fff;
    background-color: #217346;
}
.vscroll {
    display: flex;
    flex: none;
    flex-direction: column;
    width: 14px;
    margin-top: 2px;
    padding-left: 3px;
    overflow: hidden;
}
.vscroll button, .vthumb {
    flex: none;
    width: 15px;
    height: 15px;
    border: 1px solid #ababab;
    background-color: #fff;
    line-height: 0;
}
.vthumb {
    flex: 374;
}
.vtrack {
    flex: 322;
    width: 15px;
    background-color: #d9d9d9;
}

/* Sheet tabs */
.sheet-bar {
    display: flex;
    flex: none;
    align-items: center;
    height: 28px;
    padding-right: 14px;
    border-top: 1px solid #999;
}
.sheet-nav {
    display: flex;
    gap: 23px;
    width: 100px;
    padding-left: 27px;
}
.sheet-nav button, .add-sheet {
    display: flex;
}
.sheet-tab {
    align-self: flex-start;
    width: 86px;
    height: 25px;
    margin-top: -1px;
    border: 1px solid #999;
    border-width: 0 1px 2px;
    border-bottom-color: #217346;
    background-color: #fff;
    color: #217346;
    font-family: "Open Sans", sans-serif;
    font-size: 13px;
    font-weight: 600;
}
.add-sheet {
    margin: 0 auto 0 33px;
}
.hscroll {
    display: flex;
    width: 730px;
}
.hscroll button, .hthumb {
    width: 15px;
    height: 15px;
    border: 1px solid #ababab;
    background-color: #fff;
    line-height: 0;
}
.hthumb {
    flex: 668;
}
.htrack {
    flex: 32;
    background-color: #d9d9d9;
}

/* Status bar */
.status {
    display: flex;
    flex: none;
    align-items: center;
    height: 18px;
    padding: 0 1px 0 8px;
    border-top: 1px solid #c6c6c6;
    background-color: #f3f2f1;
}
.view {
    width: 40px;
    height: 17px;
    padding-top: 3px;
    line-height: 0;
}
.view.current {
    background-color: #c6c6c6;
}
.zoom-step {
    width: 19px;
    line-height: 0;
}
.zoom {
    width: 100px;
    height: 17px;
    appearance: none;
    background: linear-gradient(#b1b1b1, #b1b1b1) 0 9px / 100% 1px no-repeat;
}
.zoom::-webkit-slider-thumb {
    width: 5px;
    height: 11px;
    appearance: none;
    background-color: #777;
}
.zoom-value {
    width: 34px;
    text-align: right;
}
```
FILE: script.js
```
// Column letters with their widths in pixels
const columns = [['A', 64], ['B', 191], ['C', 193], ['D', 228]];
for (const letter of 'EFGHIJKLMNOPQRSTUVW') {
    columns.push([letter, 64]);
}

// Temperature and time of each reading, newest first
const readings = [
    [97.5, '2020-05-28T06:25:28.633'],
    [97.7, '2020-05-28T06:25:12.64'],
    [97.5, '2020-05-28T06:08:15.137'],
    [97.7, '2020-05-28T06:08:03.893'],
    [97.5, '2020-05-28T06:07:06.173'],
    [97.5, '2020-05-28T06:06:55.263'],
    [97.5, '2020-05-28T06:06:48.593'],
    [97.5, '2020-05-28T06:06:38.327'],
    [97.7, '2020-05-28T06:06:24.85'],
    [97.5, '2020-05-28T06:06:13.4'],
    [97.5, '2020-05-28T06:05:57.987'],
    [97.5, '2020-05-28T06:05:33.757'],
    [97.7, '2020-05-28T06:05:18.347'],
    [97.5, '2020-05-28T06:03:16.903'],
    [97.7, '2020-05-28T06:03:06.7'],
    [97.7, '2020-05-28T06:02:41.35'],
    [97.7, '2020-05-28T06:02:31.947'],
    [97.5, '2020-05-28T06:01:46.91'],
    [97.5, '2020-05-28T06:01:21.377'],
    [97.7, '2020-05-28T06:01:01.707'],
    [97.5, '2020-05-28T06:00:43.747'],
    [97.2, '2020-05-28T06:00:12.19'],
    [97.7, '2020-05-28T05:59:44.037'],
    [97.5, '2020-05-28T05:59:22.7'],
    [100.6, '2020-05-28T05:31:47.63'],
    [97.7, '2020-05-28T05:26:03.28'],
    [97.7, '2020-05-28T05:24:27.623'],
    [97.5, '2020-05-28T05:23:43.39'],
    [97.5, '2020-05-28T05:23:35.32'],
    [97.7, '2020-05-28T05:23:20.783'],
    [97.9, '2020-05-28T05:21:14.707'],
    [97.7, '2020-05-28T05:21:05.92'],
    [97.7, '2020-05-28T05:20:39.41'],
    [97.7, '2020-05-28T05:20:07.24'],
    [97.7, '2020-05-28T05:19:52.11']
];

const firstId = 1769;
const rows = [['Id', 'Temperature', 'DeviceName', 'RecordedTime']];
readings.forEach(([temperature, time], i) => {
    rows.push([firstId - i, temperature, 'Mohanabhinav', time]);
});

document.getElementById('cols').innerHTML = '<col style="width:26px">' +
    columns.map(([, width]) => `<col style="width:${width}px">`).join('');

document.getElementById('letters').innerHTML = '<th></th>' +
    columns.map(([letter]) => `<th${letter === 'F' ? ' class="picked"' : ''}>${letter}</th>`).join('');

document.getElementById('rows').innerHTML = rows.map((row, r) => {
    const cells = columns.map(([letter], c) => {
        const value = row[c] ?? '';
        let name = typeof value === 'number' ? 'num' : '';
        if (letter === 'F' && r === 1) name = 'selected';
        return `<td${name ? ` class="${name}"` : ''}>${value}</td>`;
    }).join('');
    return `<tr><th${r === 1 ? ' class="picked"' : ''}>${r + 1}</th>${cells}</tr>`;
}).join('');
```
